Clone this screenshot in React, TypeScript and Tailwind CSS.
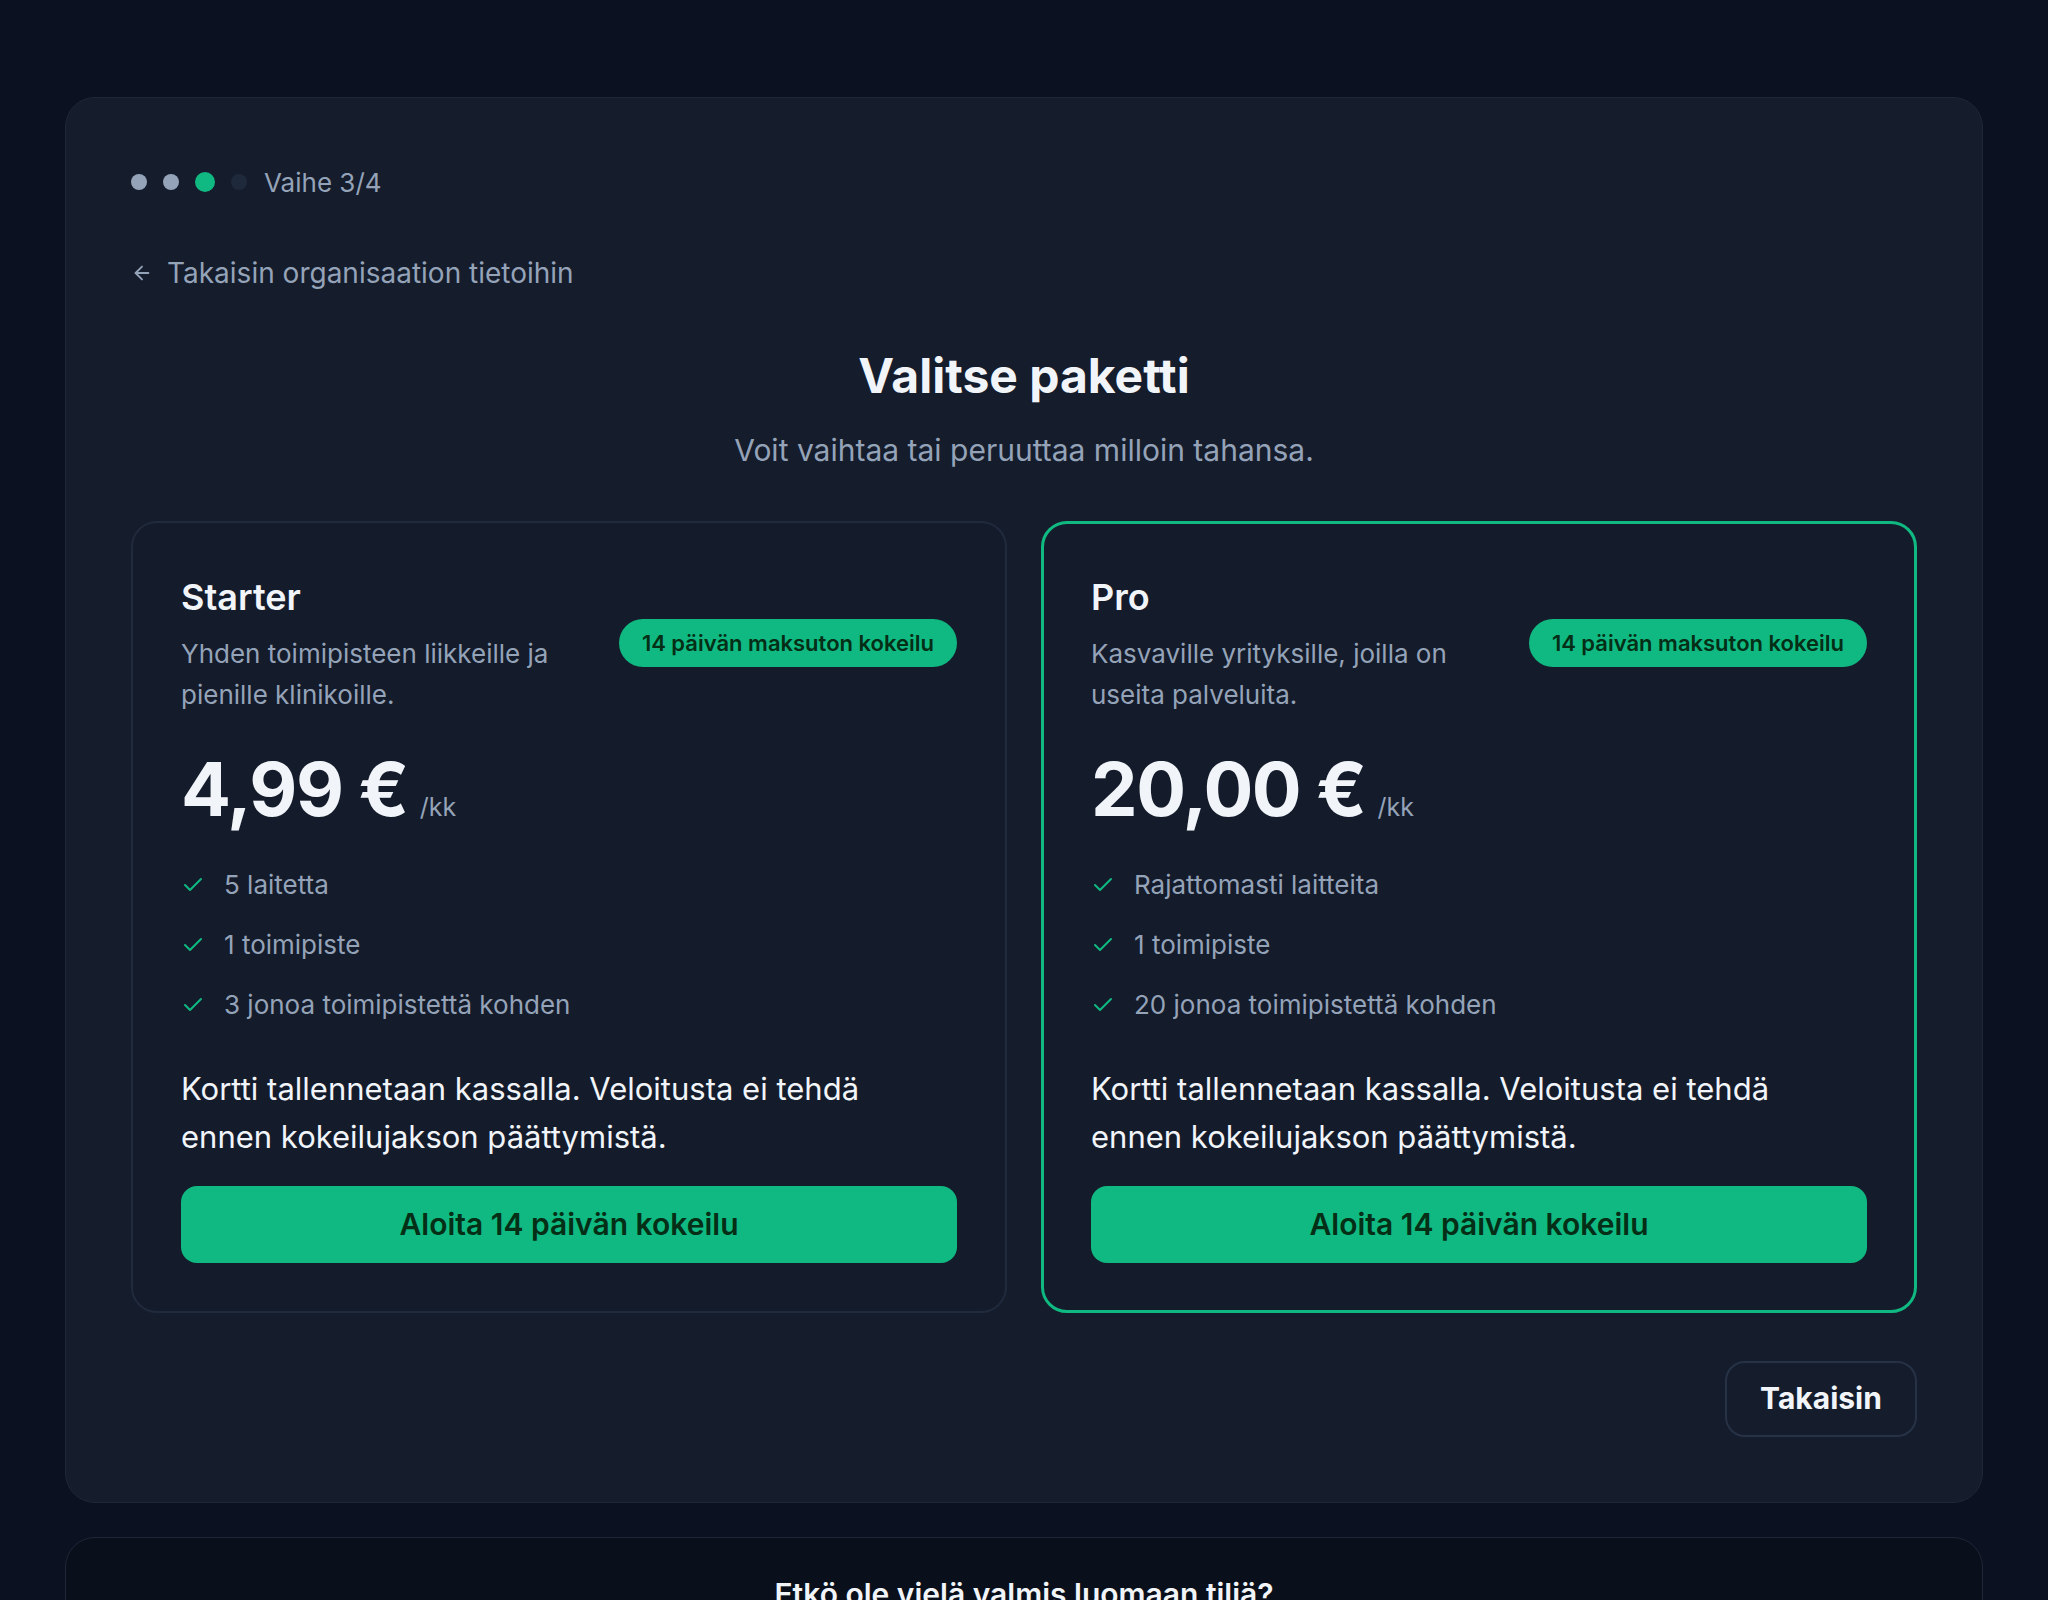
import { ArrowLeft, Check } from "lucide-react";

type Plan = {
  name: string;
  description: string;
  price: string;
  features: string[];
  highlighted: boolean;
};

const plans: Plan[] = [
  {
    name: "Starter",
    description: "Yhden toimipisteen liikkeille ja pienille klinikoille.",
    price: "4,99 €",
    features: ["5 laitetta", "1 toimipiste", "3 jonoa toimipistettä kohden"],
    highlighted: false,
  },
  {
    name: "Pro",
    description: "Kasvaville yrityksille, joilla on useita palveluita.",
    price: "20,00 €",
    features: ["Rajattomasti laitteita", "1 toimipiste", "20 jonoa toimipistettä kohden"],
    highlighted: true,
  },
];

function StepDots() {
  return (
    <div className="flex h-[38px] items-center gap-4">
      <span className="h-4 w-4 rounded-full bg-[#94a3b8]" />
      <span className="h-4 w-4 rounded-full bg-[#94a3b8]" />
      <span className="h-5 w-5 rounded-full bg-[#10b981]" />
      <span className="h-4 w-4 rounded-full bg-[#1e293b]" />
      <span className="ml-[1px] text-[26px] text-[#94a3b8]">Vaihe 3/4</span>
    </div>
  );
}

function PlanCard({ plan }: { plan: Plan }) {
  const border = plan.highlighted
    ? "border-[3px] border-[#10b981] p-[47px]"
    : "border-2 border-[#1f2a3c] p-[48px]";
  return (
    <div className={`rounded-[26px] bg-[#141b2b] ${border}`}>
      <div className="flex items-center justify-between gap-6">
        <div className="w-[400px]">
          <h3 className="text-[36px] font-semibold leading-[52px] text-[#f1f5f9]">{plan.name}</h3>
          <p className="mt-[10px] text-[26px] leading-[41px] text-[#94a3b8]">{plan.description}</p>
        </div>
        <span className="shrink-0 rounded-full bg-[#10b981] px-[23px] py-[10px] text-[22px] font-semibold leading-[28px] text-[#052e16]">
          14 päivän maksuton kokeilu
        </span>
      </div>

      <div className="mt-[37px] flex items-baseline gap-3">
        <span className="text-[74px] font-bold leading-none tracking-[-0.02em] text-[#f1f5f9]">{plan.price}</span>
        <span className="text-[25px] text-[#94a3b8]">/kk</span>
      </div>

      <ul className="mt-[40px] flex flex-col gap-6">
        {plan.features.map((f) => (
          <li key={f} className="flex h-[36px] items-center gap-[19px] text-[26px] text-[#94a3b8]">
            <Check size={24} strokeWidth={2} className="text-[#10b981]" />
            <span>{f}</span>
          </li>
        ))}
      </ul>

      <p className="mt-[42px] text-[31px] leading-[48px] text-[#f1f5f9]">
        Kortti tallennetaan kassalla. Veloitusta ei tehdä ennen kokeilujakson päättymistä.
      </p>

      <button className="mt-[25px] flex h-[77px] w-full items-center justify-center rounded-[16px] bg-[#10b981] text-[30px] font-semibold text-[#052e16]">
        Aloita 14 päivän kokeilu
      </button>
    </div>
  );
}

export default function App() {
  return (
    <div
      className="min-h-screen bg-[#0b1120] px-[65px] pt-[97px] pb-[60px]"
      style={{ fontFamily: "Inter, 'Noto Sans', sans-serif" }}
    >
      <section className="rounded-[30px] border border-[#1e2738] bg-[#151c2c] p-[65px]">
        <StepDots />

        <a className="mt-[52px] flex h-[40px] items-center gap-[14px] text-[28px] text-[#94a3b8]">
          <ArrowLeft size={22} strokeWidth={2} />
          <span>Takaisin organisaation tietoihin</span>
        </a>

        <h1 className="mt-[55px] text-center text-[48px] font-bold leading-[56px] text-[#f1f5f9]">Valitse paketti</h1>
        <p className="mt-[26px] text-center text-[30px] leading-[40px] text-[#94a3b8]">
          Voit vaihtaa tai peruuttaa milloin tahansa.
        </p>

        <div className="mt-[51px] grid grid-cols-2 gap-[34px]">
          {plans.map((p) => (
            <PlanCard key={p.name} plan={p} />
          ))}
        </div>

        <div className="mt-[48px] flex justify-end">
          <button className="h-[76px] w-[192px] rounded-[20px] border-2 border-[#263246] text-[30px] font-bold text-[#f1f5f9]">
            Takaisin
          </button>
        </div>
      </section>

      <section className="mt-[34px] rounded-[30px] border border-[#1e2738] bg-[#0a101b] px-[65px] pt-[38px] pb-[60px] text-center">
        <h2 className="text-[30px] font-semibold leading-[36px] text-[#f1f5f9]">Etkö ole vielä valmis luomaan tiliä?</h2>
        <p className="mt-4 text-[24px] text-[#94a3b8]">Voit palata myöhemmin ja jatkaa siitä, mihin jäit.</p>
      </section>
    </div>
  );
}
